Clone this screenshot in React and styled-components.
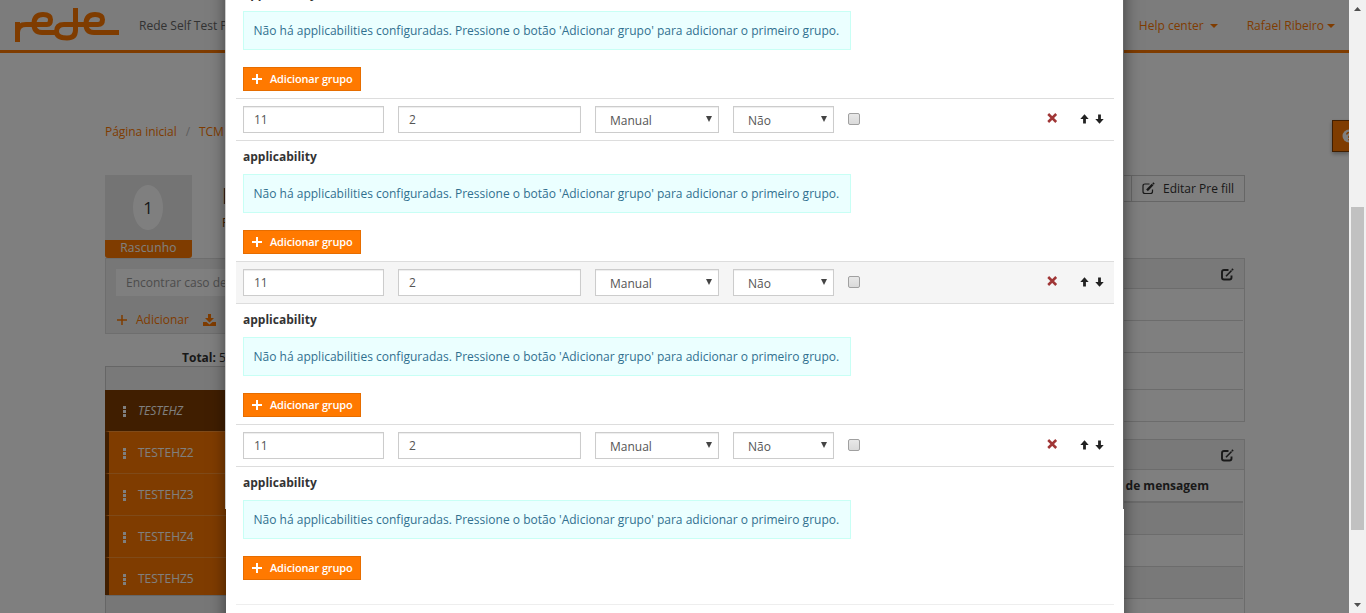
import React from "react";
import styled, { createGlobalStyle, css } from "styled-components";

const Global = createGlobalStyle`
  * { box-sizing: border-box; }
  html, body { margin: 0; height: 613px; overflow: hidden; background: #fff; }
  body { font-family: "Open Sans", sans-serif; font-size: 12px; color: #333; line-height: 18px; }
  svg { display: block; }
`;

const Shell = styled.div`display: flex; width: 1366px; height: 613px;`;
const Viewport = styled.div`position: relative; width: 1349px; height: 613px; overflow: hidden;`;
const Page = styled.div`display: flex; flex-direction: column; height: 613px; overflow: hidden;`;

const Header = styled.header`
  height: 53px; flex: none; display: flex; align-items: center;
  padding: 0 14px; background: #f8f8f8; border-bottom: 3px solid #ff7900;
`;
const Product = styled.span`margin-left: 19px; padding-top: 2px; color: #666; white-space: nowrap;`;
const Nav = styled.nav`display: flex; gap: 29px; margin-left: auto; padding-top: 2px; color: #ff7900;`;
const NavItem = styled.span`display: flex; align-items: center; gap: ${p => p.$gap}px;`;
const Caret = styled.i`border: 4px solid transparent; border-top-color: currentColor; border-bottom: 0;`;

const Crumbs = styled.div`
  display: flex; gap: 9px; margin: 70px 0 0 105px; height: 18px; flex: none;
  color: #ff7900; letter-spacing: -.06px;
`;
const Slash = styled.span`color: #bbb;`;
const TitleRow = styled.div`display: flex; height: 83px; flex: none; margin: 34px 104px 0 105px;`;
const Columns = styled.div`display: flex; gap: 24px; margin: 0 104px 0 105px;`;
const Side = styled.aside`width: 270px; flex: none;`;
const Main = styled.main`flex: 1; min-width: 0;`;

const Badge = styled.div`width: 87px; height: 83px; background: #e9e9e9; display: flex; flex-direction: column; align-items: center; justify-content: space-between; border-radius: 0 0 3px 3px; overflow: hidden;`;
const Count = styled.div`width: 30px; height: 45px; margin: 10px 1px 0 0; border-radius: 50%; background: #fff; font-size: 17px; line-height: 45px; text-align: center;`;
const Status = styled.div`width: 100%; height: 18px; background: #ff7900; color: #fff; text-align: center; line-height: 16px; letter-spacing: .2px;`;
const Filter = styled.div`height: 76px; padding: 10px; background: #eee; border: 1px solid #ddd;`;
const Search = styled.div`height: 27px; padding: 0 10px; background: #fff; color: #999; line-height: 28px; white-space: nowrap;`;
const Tools = styled.div`display: flex; align-items: center; margin-top: 15px; color: #ff7900; padding-left: 1px;`;
const ToolText = styled.span`margin: 0 14px 0 9px;`;
const Total = styled.div`height: 32px; padding: 15px 0 0 77px;`;
const ListHead = styled.div`height: 24px; background: #f2f2f2; border: 1px solid #ccc; border-bottom: 0;`;
const Item = styled.div`
  display: flex; align-items: flex-start; gap: 12px; height: 42px; padding: 12px 0 0 14px; color: #fff;
  background: #ff7900; border-left: 4px solid #803c00; border-bottom: 1px solid #ff9433;
  ${p => p.$on && css`background: #803c00; font-style: italic;`}
  &:nth-last-child(2) { height: 37px; border-bottom: 0; }
`;
const Dots = styled.i`width: 3px; height: 11px; margin-top: 4px; background: repeating-linear-gradient(#fff 0 3px, transparent 3px 4px);`;
const ListFoot = styled.div`height: 40px; background: #eee; border: 1px solid #ccc;`;

const Heading = styled.div`margin-left: 30px; flex: 1;`;
const Title = styled.h1`margin: 10px 0 7px; font-size: 21px; line-height: 22px; font-weight: 400;`;
const Sub = styled.div`color: #803c00;`;
const Actions = styled.div`display: flex; height: 27px;`;
const Action = styled.div`display: flex; align-items: center; gap: 8px; width: ${p => p.$w}px; padding-left: 10px; border: 1px solid #ccc; margin-left: -1px;`;
const Panel = styled.section`border: 1px solid #d8d8d8; padding-right: 1px; margin-bottom: 17px; background: #fff;`;
const PanelHead = styled.div`height: 30px; margin-right: -1px; padding: 2px 10px 0 0; background: #f3f3f3; border-bottom: 1px solid #d8d8d8; display: flex; align-items: center; justify-content: flex-end;`;
const Line = styled.div`
  height: ${p => p.$h}px; background: ${p => (p.$dark ? "#f3f3f3" : "#fff")};
  border-bottom: ${p => p.$b ?? 1}px solid #d8d8d8;
  display: flex; align-items: center; justify-content: flex-end;
  padding: 1px 34px 0 0; font-weight: 700;
`;
const Help = styled.div`
  position: absolute; right: 0; top: 120px; width: 17px; height: 32px; overflow: hidden;
  background: #ff7900; border: 1px solid #803c00; border-right: 0; padding: 8px 0 0 9px;
  box-shadow: 0 2px 4px rgba(0,0,0,.3);
`;

const Backdrop = styled.div`position: absolute; inset: 0; background: rgba(0,0,0,.5);`;
const Modal = styled.div`
  position: absolute; left: 226px; top: -40px; width: 898px; height: 700px; background: #fff;
  padding: 17px 10px 0; box-shadow: 0 5px 15px rgba(0,0,0,.5);
  &::before, &::after { content: ""; position: absolute; top: 0; width: 1px; height: 549px; }
  &::before { left: -1px; background: #ccc; }
  &::after { right: 0; background: #666; }
`;
const Details = styled.div`height: 121px; border-top: 1px solid #ddd; padding: 7px 7px 0;`;
const Label = styled.div`font-weight: 700; height: 18px;`;
const Info = styled.div`
  width: 608px; height: 39px; margin: 8px 0 17px; padding: 0 9.500px; line-height: 38px;
  background: #ebffff; border: 1px solid #c8fff5; color: #31708f; white-space: nowrap; letter-spacing: .008px;
`;
const Add = styled.button`
  display: flex; align-items: center; gap: 8px; width: 118px; height: 24px; padding: 0 0 0 8px;
  font: 600 11px/22px "Open Sans", sans-serif; white-space: nowrap; letter-spacing: -.15px;
  color: #fff; background: #ff7900; border: 1px solid #e66d00;
`;
const Row = styled.div`
  display: flex; align-items: flex-start; gap: 14px; height: 42px; padding: 7px 7px 0;
  border-top: 1px solid #ddd; background: ${p => (p.$alt ? "#f5f5f5" : "#fff")};
`;
const Field = styled.div`
  width: ${p => p.$w}px; height: 27px; padding: 0 10px; line-height: 26px;
  background: #fff; border: 1px solid #ccc; box-shadow: inset 0 1px 1px rgba(0,0,0,.075); color: #555;
`;
const Select = styled(Field)`display: flex; justify-content: space-between; padding: 0 6px 0 14px; line-height: 27px;`;
const Arrow = styled.i`margin-top: 9px; border: 3.5px solid transparent; border-top: 6px solid #444; border-bottom: 0; height: 0;`;
const Check = styled.i`width: 12px; height: 12px; margin-top: 7px; border: 1px solid #a0a0a0; border-radius: 2px; background: linear-gradient(#e8e8e8, #dadada);`;
const RowTools = styled.div`display: flex; align-items: flex-start; margin: 7px 3px 0 auto;`;
const MoveIcon = styled.svg`margin-top: 1px;`;
const Gap = styled.span`width: ${p => p.$w}px;`;
const End = styled.div`margin-top: 17px; border-top: 1px solid #eee;`;

const Scroll = styled.div`width: 17px; background: #f1f1f1; display: flex; flex-direction: column; align-items: center; justify-content: space-between; padding: 7px 0 6px;`;
const Thumb = styled.div`width: 13px; height: 323px; margin-top: 123px; background: #c1c1c1;`;

const Plus = ({ s = 10, w = 2 }) => (
  <svg width={s} height={s} viewBox="0 0 10 10"><path d="M5 0v10M0 5h10" stroke="currentColor" strokeWidth={w} /></svg>
);
const Cross = () => (
  <svg width="11" height="10" viewBox="0 0 11 10"><path d="M1.200 1l8 8M9.200 1L1.200 9" stroke="#a03636" strokeWidth="2.500" /></svg>
);
const Move = ({ down }) => (
  <MoveIcon width="9" height="10" viewBox="0 0 9 10"><path transform={down ? "rotate(180 4.5 5)" : undefined} d="M4.500 .3L8.700 5H5.900V9.500H3.100V5H.3z" fill="#222" /></MoveIcon>
);
const Edit = ({ bold }) => (
  <svg width="13" height="13" viewBox="0 0 13 13" fill="none" stroke="#333" strokeWidth={bold ? 1.9 : 1.2}>
    <path d="M7.500 2H3Q1 2 1 4v5.500q0 2 2 2h5.500q2 0 2-2V7.500" />
    <path d="M5 8.300L10.600 2.500" strokeWidth={bold ? 1.6 : 2.4} /><path d="M10.800 .8l1.400 1.400" strokeWidth="1.500" />
  </svg>
);
const Download = () => (
  <svg width="13" height="12" viewBox="0 0 13 12" fill="#ff7900"><path d="M5 0h3v4h3L6.500 8.500 2 4h3zM0 8h3.500l3 2.500 3-2.500H13v4H0z" /></svg>
);
const Logo = () => (
  <svg width="106" height="36" viewBox="0 0 106 36" fill="none" stroke="#ff7900" strokeWidth="5">
    <path d="M3.500 35V15M3.500 25Q4 17.500 12 17.500H33Q36.500 17.500 36.500 12.500T29 7.500Q20 7.500 20 17Q20 25.500 28 25.500H42" />
    <path d="M61.500 1V23Q61.500 31 53 31Q42.500 31 42.500 24.500Q42.500 17.500 50 17.500H84Q88.500 17.500 88.500 12.500T81 7.500Q72 7.500 72 17Q72 25.500 80 25.500H105" />
  </svg>
);

const DetailsBlock = () => (
  <Details>
    <Label>applicability</Label>
    <Info>Não há applicabilities configuradas. Pressione o botão 'Adicionar grupo' para adicionar o primeiro grupo.</Info>
    <Add><Plus /> Adicionar grupo</Add>
  </Details>
);
const FieldRow = ({ alt }) => (
  <Row $alt={alt}>
    <Field $w={141}>11</Field>
    <Field $w={183}>2</Field>
    <Select $w={124}>Manual<Arrow /></Select>
    <Select $w={101}>Não<Arrow /></Select>
    <Check />
    <RowTools><Cross /><Gap $w={22} /><Move /><Gap $w={6} /><Move down /></RowTools>
  </Row>
);

export default function App() {
  return (
    <>
      <Global />
      <Shell>
        <Viewport>
          <Page>
            <Header>
              <Logo />
              <Product>Rede Self Test P</Product>
              <Nav>
                <NavItem $gap={6}>Help center <Caret /></NavItem>
                <NavItem $gap={3}>Rafael Ribeiro<Caret /></NavItem>
              </Nav>
            </Header>
            <Crumbs><span>Página inicial</span><Slash>/</Slash><span>TCM</span></Crumbs>
            <TitleRow>
              <Badge><Count>1</Count><Status>Rascunho</Status></Badge>
              <Heading><Title>R</Title><Sub>P</Sub></Heading>
              <Actions><Action $w={60} /><Action $w={114}><Edit />Editar Pre fill</Action></Actions>
            </TitleRow>
            <Columns>
              <Side>
                <Filter>
                  <Search>Encontrar caso de</Search>
                  <Tools><Plus w={1.5} /><ToolText>Adicionar</ToolText><Download /><ToolText>I</ToolText></Tools>
                </Filter>
                <Total><b>Total:</b> 5</Total>
                <ListHead />
                {["TESTEHZ", "TESTEHZ2", "TESTEHZ3", "TESTEHZ4", "TESTEHZ5"].map((t, i) => (
                  <Item key={t} $on={i === 0}><Dots />{t}</Item>
                ))}
                <ListFoot />
              </Side>
              <Main>
                <Panel>
                  <PanelHead><Edit bold /></PanelHead>
                  <Line $h={32} /><Line $h={32} /><Line $h={37} /><Line $h={31} $b={0} />
                </Panel>
                <Panel>
                  <PanelHead><Edit bold /></PanelHead>
                  <Line $h={33} $b={2}>de mensagem</Line>
                  <Line $h={32} $dark /><Line $h={32} /><Line $h={32} $dark /><Line $h={32} />
                </Panel>
              </Main>
            </Columns>
          </Page>
          <Help><svg width="14" height="14" viewBox="0 0 14 14"><circle cx="7" cy="7" r="6.500" fill="#fff" /><path d="M4.800 5.500Q5 3.500 7 3.500T9 5.500Q9 6.500 7 7.500V9M7 10v1.500" fill="none" stroke="#ff7900" strokeWidth="1.600" /></svg></Help>
          <Backdrop />
          <Modal>
            <DetailsBlock />
            <FieldRow /><DetailsBlock />
            <FieldRow alt /><DetailsBlock />
            <FieldRow /><DetailsBlock />
            <End />
          </Modal>
        </Viewport>
        <Scroll>
          <svg width="7" height="4" viewBox="0 0 7 4"><path d="M3.500 0L7 4H0z" fill="#505050" /></svg>
          <Thumb />
          <svg width="7" height="4" viewBox="0 0 7 4"><path d="M3.500 4L7 0H0z" fill="#505050" /></svg>
        </Scroll>
      </Shell>
    </>
  );
}
